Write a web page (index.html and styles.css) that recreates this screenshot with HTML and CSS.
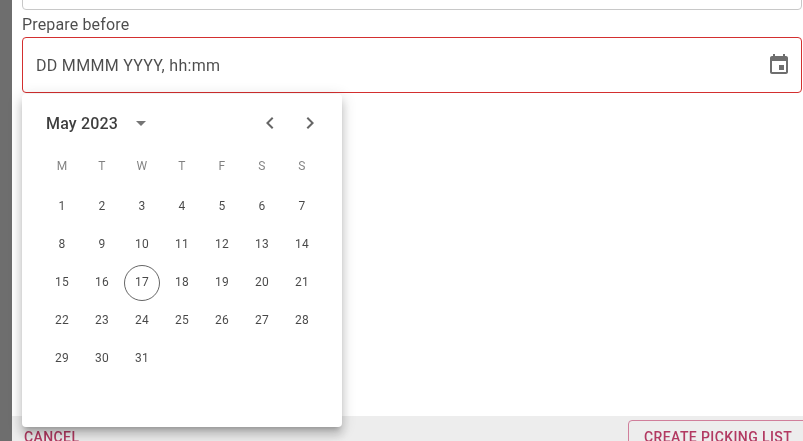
FILE: index.html
```html
<!DOCTYPE html>
<html lang="en">
<head>
<meta charset="utf-8">
<title>Create picking list</title>
<link rel="stylesheet" href="styles.css">
</head>
<body>
<div class="dialog">
  <div class="dialog_content">
    <div class="field field_prev"></div>
    <label class="field_label">Prepare before</label>
    <div class="field_wrap">
      <div class="field field_error">
        <span class="field_value">DD MMMM YYYY, hh:mm</span>
        <svg class="cal_icon" width="24" height="24" viewBox="0 0 24 24"><path d="M17 12h-5v5h5v-5zM16 1v2H8V1H6v2H5c-1.11 0-1.99.9-1.99 2L3 19c0 1.1.89 2 2 2h14c1.1 0 2-.9 2-2V5c0-1.1-.9-2-2-2h-1V1h-2zm3 18H5V8h14v11z"/></svg>
      </div>
      <div class="picker">
        <div class="picker_head">
          <span class="picker_month">May 2023</span>
          <svg class="picker_drop" width="24" height="24" viewBox="0 0 24 24"><path d="M7 10l5 5 5-5z"/></svg>
          <span class="picker_nav">
            <svg width="24" height="24" viewBox="0 0 24 24"><path d="M15.41 7.41L14 6l-6 6 6 6 1.41-1.41L10.83 12z"/></svg>
            <svg width="24" height="24" viewBox="0 0 24 24"><path d="M10 6L8.59 7.41 13.17 12l-4.58 4.59L10 18l6-6z"/></svg>
          </span>
        </div>
        <div class="picker_week">
          <span>M</span><span>T</span><span>W</span><span>T</span><span>F</span><span>S</span><span>S</span>
        </div>
        <div class="picker_days">
          <span>1</span><span>2</span><span>3</span><span>4</span><span>5</span><span>6</span><span>7</span>
          <span>8</span><span>9</span><span>10</span><span>11</span><span>12</span><span>13</span><span>14</span>
          <span>15</span><span>16</span><span class="today">17</span><span>18</span><span>19</span><span>20</span><span>21</span>
          <span>22</span><span>23</span><span>24</span><span>25</span><span>26</span><span>27</span><span>28</span>
          <span>29</span><span>30</span><span>31</span>
        </div>
      </div>
    </div>
  </div>
  <div class="dialog_actions">
    <button class="btn_cancel">CANCEL</button>
    <button class="btn_create">CREATE PICKING LIST</button>
  </div>
</div>
</body>
</html>
```

FILE: styles.css
```css
html, body {
  margin: 0;
  height: 100%;
  overflow: hidden;
  background: #6e6e6e;
  font-family: Roboto, "Liberation Sans", sans-serif;
}

.dialog {
  display: flex;
  flex-direction: column;
  height: 441px;
  margin-left: 12px;
  background: #ffffff;
}

.dialog_content {
  position: relative;
  z-index: 1;
  flex: 1;
  padding: 0 1px 0 10px;
  will-change: opacity;
}

.field {
  display: flex;
  align-items: center;
  justify-content: space-between;
  box-sizing: border-box;
  height: 56px;
  border: 1px solid #c8c8c8;
  border-radius: 4px;
}

.field_prev {
  margin-top: -46px;
}

.field_label {
  display: block;
  margin-top: 5px;
  height: 22px;
  font-size: 16px;
  line-height: 20px;
  letter-spacing: 0.15px;
  color: rgba(0, 0, 0, 0.7);
}

.field_wrap {
  position: relative;
}

.field_error {
  border-color: #d32f2f;
  padding: 0 10px 0 13px;
}

.field_value {
  font-size: 16px;
  letter-spacing: 0.3px;
  color: rgba(0, 0, 0, 0.7);
}

.cal_icon {
  fill: #6e6e6e;
}

.picker {
  position: absolute;
  top: 57px;
  left: 0;
  width: 320px;
  height: 333px;
  box-sizing: border-box;
  background: #ffffff;
  border-radius: 4px;
  box-shadow: 0 5px 5px -3px rgba(0,0,0,0.2), 0 8px 10px 1px rgba(0,0,0,0.14), 0 3px 14px 2px rgba(0,0,0,0.12);
}

.picker_head {
  display: flex;
  align-items: center;
  height: 30px;
  padding: 14px 20px 0 24px;
}

.picker_month {
  font-size: 16px;
  font-weight: 500;
  letter-spacing: 0.15px;
  color: rgba(0, 0, 0, 0.76);
}

.picker_drop {
  margin-left: 11px;
  fill: #757575;
}

.picker_nav {
  display: flex;
  gap: 16px;
  margin-left: auto;
  fill: #666666;
}

.picker_week,
.picker_days {
  display: grid;
  grid-template-columns: repeat(7, 40px);
  padding: 0 20px;
  justify-items: center;
}

.picker_week {
  margin-top: 8px;
  height: 40px;
  align-items: center;
  font-size: 12px;
  letter-spacing: 0.2px;
  color: rgba(0, 0, 0, 0.5);
}

.picker_days {
  grid-auto-rows: 38px;
  margin-top: 2px;
  font-size: 12px;
  letter-spacing: 0.3px;
  color: rgba(0, 0, 0, 0.72);
}

.picker_days span {
  display: flex;
  align-items: center;
  justify-content: center;
  box-sizing: border-box;
  width: 36px;
  height: 36px;
  border-radius: 50%;
}

.picker_days .today {
  margin-top: 1px;
  padding-bottom: 2px;
  border: 1px solid rgba(0, 0, 0, 0.6);
}

.dialog_actions {
  display: flex;
  justify-content: space-between;
  align-items: flex-start;
  height: 25px;
  box-sizing: border-box;
  padding-top: 4px;
  overflow: hidden;
  background: #ededed;
}

.dialog_actions button {
  font-family: Roboto, "Liberation Sans", sans-serif;
  font-size: 14px;
  font-weight: 500;
  letter-spacing: 0.4px;
  color: #b23a62;
  background: none;
  flex-shrink: 0;
  will-change: opacity;
}

.btn_cancel {
  border: 0;
  height: 34px;
  padding: 0 12px;
}

.btn_create {
  height: 34px;
  width: 190px;
  margin-right: -15px;
  padding: 0 15px;
  text-align: left;
  border: 1px solid #d07f9b;
  border-radius: 4px;
}
```
